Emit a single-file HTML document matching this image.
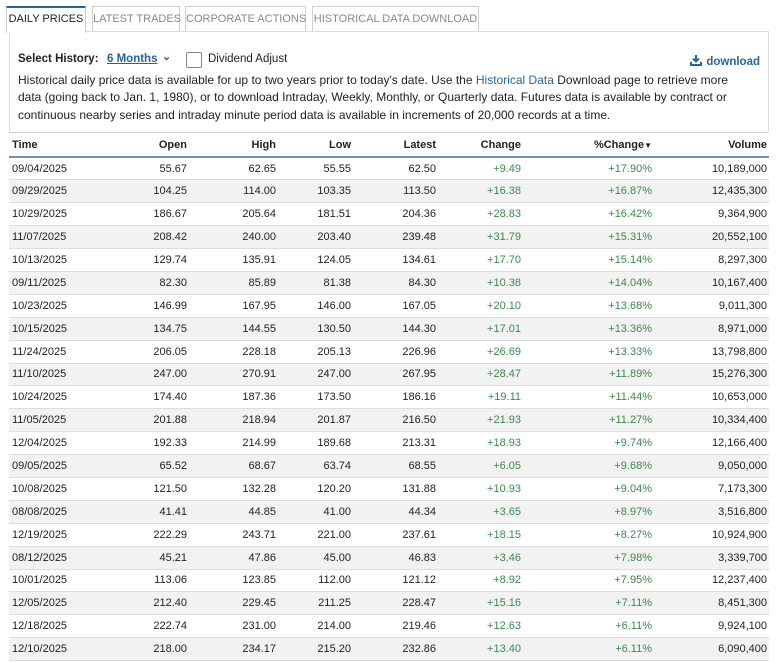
<!DOCTYPE html>
<html><head><meta charset="utf-8"><style>
*{box-sizing:border-box;margin:0;padding:0}
body{width:780px;height:662px;overflow:hidden;background:#fff;font-family:"Liberation Sans",sans-serif;font-size:11px;color:#222;position:relative}
.tab{position:absolute;top:6px;height:26px;border:1px solid #d0d0d0;border-bottom:none;background:#fff;color:#888;font-size:11px;line-height:24px;text-align:center;white-space:nowrap}
.tab.act{color:#222;border-top:2px solid #2a6496;line-height:22px;height:27px;z-index:2}
.panel{position:absolute;left:9px;top:31px;width:760px;height:102px;border:1px solid #ddd;border-bottom-color:#ccc}
.sel{position:absolute;left:8px;top:21px;font-weight:bold;font-size:11.5px}
.six{position:absolute;left:97px;top:21px;color:#2a6496;font-weight:bold;text-decoration:underline;font-size:11.5px}
.chev{position:absolute;left:152px;top:18px;color:#2a6496;font-weight:bold;font-size:11px}
.cb{position:absolute;left:176px;top:20px;width:16px;height:16px;border:1px solid #888;border-radius:2px}
.div{position:absolute;left:198px;top:21px;font-size:11.5px}
.dl{position:absolute;right:8px;top:22px;color:#2a6496;font-weight:bold;font-size:11.5px}
.txt{position:absolute;left:8px;top:40px;width:745px;line-height:17.3px;font-size:12px}
.txt a{color:#2a6496}
table{position:absolute;left:9px;top:134px;width:760px;border-collapse:collapse}
th{height:23px;font-weight:bold;text-align:right;border-bottom:2px solid #6f93b3;padding:0 2px}
td{height:22.9px;text-align:right;border-bottom:1px solid #ddd;padding:0 2px}
th:first-child,td:first-child{text-align:left;padding-left:3px}
tr:nth-child(odd) td{background:#f2f2f2}
td.g{color:#3a8a4a}
</style></head><body>
<div class="tab act" style="left:6px;width:80px">DAILY PRICES</div>
<div class="tab" style="left:92px;width:88px">LATEST TRADES</div>
<div class="tab" style="left:185px;width:121px">CORPORATE ACTIONS</div>
<div class="tab" style="left:312px;width:167px">HISTORICAL DATA DOWNLOAD</div>
<div class="panel">
<div class="sel">Select History:</div><div class="six">6 Months</div><div class="chev">&#8964;</div>
<div class="cb"></div><div class="div">Dividend Adjust</div>
<div class="dl"><svg width="12" height="12" viewBox="0 0 12 12" style="vertical-align:-1px;margin-right:4px"><path d="M6 1v6M3 4.5l3 3 3-3M1 8v3h10V8" stroke="#2a6496" stroke-width="2" fill="none"/></svg>download</div>
<div class="txt">Historical daily price data is available for up to two years prior to today's date. Use the <a>Historical Data</a> Download page to retrieve more<br>data (going back to Jan. 1, 1980), or to download Intraday, Weekly, Monthly, or Quarterly data. Futures data is available by contract or<br>continuous nearby series and intraday minute period data is available in increments of 20,000 records at a time.</div>
</div>
<table>
<colgroup><col style="width:104px"><col style="width:76px"><col style="width:89px"><col style="width:75px"><col style="width:85px"><col style="width:85px"><col style="width:131px"><col style="width:115px"></colgroup>
<tr><th>Time</th><th>Open</th><th>High</th><th>Low</th><th>Latest</th><th>Change</th><th>%Change<span style="font-size:8px">&#9660;</span></th><th>Volume</th></tr>
<tr><td>09/04/2025</td><td>55.67</td><td>62.65</td><td>55.55</td><td>62.50</td><td class="g">+9.49</td><td class="g">+17.90%</td><td>10,189,000</td></tr>
<tr><td>09/29/2025</td><td>104.25</td><td>114.00</td><td>103.35</td><td>113.50</td><td class="g">+16.38</td><td class="g">+16.87%</td><td>12,435,300</td></tr>
<tr><td>10/29/2025</td><td>186.67</td><td>205.64</td><td>181.51</td><td>204.36</td><td class="g">+28.83</td><td class="g">+16.42%</td><td>9,364,900</td></tr>
<tr><td>11/07/2025</td><td>208.42</td><td>240.00</td><td>203.40</td><td>239.48</td><td class="g">+31.79</td><td class="g">+15.31%</td><td>20,552,100</td></tr>
<tr><td>10/13/2025</td><td>129.74</td><td>135.91</td><td>124.05</td><td>134.61</td><td class="g">+17.70</td><td class="g">+15.14%</td><td>8,297,300</td></tr>
<tr><td>09/11/2025</td><td>82.30</td><td>85.89</td><td>81.38</td><td>84.30</td><td class="g">+10.38</td><td class="g">+14.04%</td><td>10,167,400</td></tr>
<tr><td>10/23/2025</td><td>146.99</td><td>167.95</td><td>146.00</td><td>167.05</td><td class="g">+20.10</td><td class="g">+13.68%</td><td>9,011,300</td></tr>
<tr><td>10/15/2025</td><td>134.75</td><td>144.55</td><td>130.50</td><td>144.30</td><td class="g">+17.01</td><td class="g">+13.36%</td><td>8,971,000</td></tr>
<tr><td>11/24/2025</td><td>206.05</td><td>228.18</td><td>205.13</td><td>226.96</td><td class="g">+26.69</td><td class="g">+13.33%</td><td>13,798,800</td></tr>
<tr><td>11/10/2025</td><td>247.00</td><td>270.91</td><td>247.00</td><td>267.95</td><td class="g">+28.47</td><td class="g">+11.89%</td><td>15,276,300</td></tr>
<tr><td>10/24/2025</td><td>174.40</td><td>187.36</td><td>173.50</td><td>186.16</td><td class="g">+19.11</td><td class="g">+11.44%</td><td>10,653,000</td></tr>
<tr><td>11/05/2025</td><td>201.88</td><td>218.94</td><td>201.87</td><td>216.50</td><td class="g">+21.93</td><td class="g">+11.27%</td><td>10,334,400</td></tr>
<tr><td>12/04/2025</td><td>192.33</td><td>214.99</td><td>189.68</td><td>213.31</td><td class="g">+18.93</td><td class="g">+9.74%</td><td>12,166,400</td></tr>
<tr><td>09/05/2025</td><td>65.52</td><td>68.67</td><td>63.74</td><td>68.55</td><td class="g">+6.05</td><td class="g">+9.68%</td><td>9,050,000</td></tr>
<tr><td>10/08/2025</td><td>121.50</td><td>132.28</td><td>120.20</td><td>131.88</td><td class="g">+10.93</td><td class="g">+9.04%</td><td>7,173,300</td></tr>
<tr><td>08/08/2025</td><td>41.41</td><td>44.85</td><td>41.00</td><td>44.34</td><td class="g">+3.65</td><td class="g">+8.97%</td><td>3,516,800</td></tr>
<tr><td>12/19/2025</td><td>222.29</td><td>243.71</td><td>221.00</td><td>237.61</td><td class="g">+18.15</td><td class="g">+8.27%</td><td>10,924,900</td></tr>
<tr><td>08/12/2025</td><td>45.21</td><td>47.86</td><td>45.00</td><td>46.83</td><td class="g">+3.46</td><td class="g">+7.98%</td><td>3,339,700</td></tr>
<tr><td>10/01/2025</td><td>113.06</td><td>123.85</td><td>112.00</td><td>121.12</td><td class="g">+8.92</td><td class="g">+7.95%</td><td>12,237,400</td></tr>
<tr><td>12/05/2025</td><td>212.40</td><td>229.45</td><td>211.25</td><td>228.47</td><td class="g">+15.16</td><td class="g">+7.11%</td><td>8,451,300</td></tr>
<tr><td>12/18/2025</td><td>222.74</td><td>231.00</td><td>214.00</td><td>219.46</td><td class="g">+12.63</td><td class="g">+6.11%</td><td>9,924,100</td></tr>
<tr><td>12/10/2025</td><td>218.00</td><td>234.17</td><td>215.20</td><td>232.86</td><td class="g">+13.40</td><td class="g">+6.11%</td><td>6,090,400</td></tr>
</table>
</body></html>
